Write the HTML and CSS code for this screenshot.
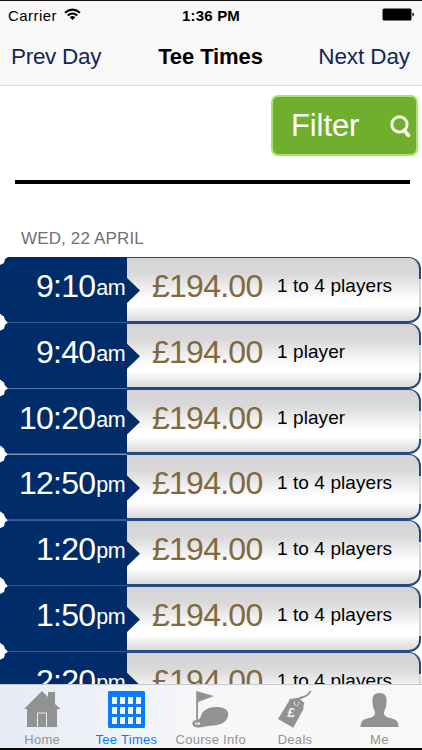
FILE: index.html
```html
<!DOCTYPE html>
<html lang="en">
<head>
<meta charset="utf-8">
<title>Tee Times</title>
<link rel="stylesheet" href="styles.css">
</head>
<body>
<div class="phone">
  <header class="top">
    <div class="status">
      <div class="carrier"><span>Carrier</span>
        <svg class="wifi" viewBox="0 0 17 13"><g fill="none" stroke="#000" stroke-width="2"><path d="M1 4.700Q8.500-1.500 16 4.700"/><path d="M3.700 7.500Q8.500 3.500 13.300 7.500"/></g><path d="M5.700 9.200Q8.500 7 11.300 9.200L8.500 12Z"/></svg>
      </div>
      <span class="clock">1:36 PM</span>
      <svg class="battery" viewBox="0 0 33 13"><rect x=".5" y=".5" width="29" height="12" rx="1.500"/><path d="M30.500 4.500Q32 5 32 6.500T30.500 8.500Z"/></svg>
    </div>
    <nav class="nav"><a>Prev Day</a><h1>Tee Times</h1><a class="next">Next Day</a></nav>
  </header>
  <main class="content">
    <button class="filter"><span>Filter</span>
      <svg viewBox="0 0 20 22"><circle cx="9" cy="9" r="7.300" fill="none" stroke="#f4fbe9" stroke-width="2.900"/><path d="M13.500 14.500L17.500 19.500" stroke="#f4fbe9" stroke-width="3.600" stroke-linecap="round"/></svg>
    </button>
    <div class="rule"></div>
    <h2>WED, 22 APRIL</h2>
    <ul class="slots">
      <li><div class="time">9:10<small>am</small></div><div class="offer"><b>£194.00</b><span>1 to 4 players</span></div></li>
      <li><div class="time">9:40<small>am</small></div><div class="offer"><b>£194.00</b><span>1 player</span></div></li>
      <li><div class="time">10:20<small>am</small></div><div class="offer"><b>£194.00</b><span>1 player</span></div></li>
      <li><div class="time">12:50<small>pm</small></div><div class="offer"><b>£194.00</b><span>1 to 4 players</span></div></li>
      <li><div class="time">1:20<small>pm</small></div><div class="offer"><b>£194.00</b><span>1 to 4 players</span></div></li>
      <li><div class="time">1:50<small>pm</small></div><div class="offer"><b>£194.00</b><span>1 to 4 players</span></div></li>
      <li><div class="time">2:20<small>pm</small></div><div class="offer"><b>£194.00</b><span>1 to 4 players</span></div></li>
    </ul>
  </main>
  <footer class="tabs">
    <div class="tab"><svg viewBox="0 0 40 40"><path d="M2 20L20 2L26 8V3H33V15L38.500 20H35V38H5V20Z"/><path d="M15.500 38V24H24.500V38" fill="none" stroke="#e9ecf2"/></svg><span>Home</span></div>
    <div class="tab active"><svg viewBox="0 0 40 40"><rect x="2" y="2" width="37" height="37" rx="1.500"/><path fill="#f0f5fd" d="M6 8h5v7H6zM14 8h5v7h-5zM22 8h5v7h-5zM30 8h5v7h-5zM6 18h5v7H6zM14 18h5v7h-5zM22 18h5v7h-5zM30 18h5v7h-5zM6 28h5v7H6zM14 28h5v7h-5zM22 28h5v7h-5zM30 28h5v7h-5z"/></svg><span>Tee Times</span></div>
    <div class="tab"><svg viewBox="0 0 40 40"><path d="M5.200 2L23 7L7 13V32H5.200Z"/><path d="M6 31C11 30 9 26 12 23C17 18 24 17.500 30 18.500C36 19.500 38 23 37 27C35.500 34 28 36.500 21 36.500L8 38.500C4 38.500 1.300 37 1.300 34.500C1.300 32 3.500 31 6 31Z"/><ellipse cx="6.500" cy="34.500" rx="2.800" ry="1.300" fill="#f3f4f6"/><path d="M5 35L7 33.500" stroke="#929292"/></svg><span>Course Info</span></div>
    <div class="tab"><svg viewBox="0 0 40 40"><path d="M14.500 9.700Q19 10 23 8.500L29.300 13.700Q28 17 28.500 20L18.300 38.700L3 30L14 12Z"/><path d="M23 14C23 5 32 11 35.500 2" fill="none" stroke="#929292" stroke-width="2"/><path d="M19.500 12.500Q18.500 16.500 21.500 16.800Q24 17 24 12.500" fill="none" stroke="#f5f5f5" stroke-width=".8"/><text x="12.500" y="28" class="pound" transform="rotate(8 16 24)">£</text></svg><span>Deals</span></div>
    <div class="tab"><svg viewBox="0 0 40 40"><path d="M20.500 4C14.500 4 12.800 8 13.600 14C13.800 19 15.500 21 16 23Q16.500 27 12 28.500C5 30 1.500 31 1.500 38H39.500C39.500 31 36 30 29 28.500Q24.500 27 25 23C25.500 21 27.200 19 27.400 14C28.200 8 26.500 4 20.500 4Z"/></svg><span>Me</span></div>
  </footer>
</div>
</body>
</html>
```
FILE: styles.css
```css
* { box-sizing: border-box; }
body { margin: 0; font-family: "Liberation Sans", Arial, sans-serif; color: #000; background: #fff; }
.phone { width: 422px; height: 750px; overflow: hidden; display: flex; flex-direction: column; border-top: 1px solid #151015; border-bottom: 2px solid #080808; }
.top { height: 85px; flex: none; background: #f8f8f8; border-bottom: 1px solid #dcdcdc; }
.status { height: 28px; padding: 0 8px; display: grid; grid-template-columns: 1fr auto 1fr; align-items: center; font-size: 15px; }
.carrier { display: flex; align-items: center; gap: 7px; letter-spacing: .45px; }
.wifi { width: 17px; height: 13px; margin-top: -2px; }
.clock { font-weight: bold; letter-spacing: .2px; }
.battery { width: 33px; height: 13px; justify-self: end; margin: -2px -1px 0 0; }
.nav { height: 54px; padding: 2px 12px 0 11px; display: grid; grid-template-columns: 1fr auto 1fr; align-items: center; font-size: 22.500px; letter-spacing: -.1px; color: #132653; }
.nav a:first-child { letter-spacing: -.3px; }
.nav h1 { margin: 0; font-size: 22px; color: #000; }
.next { text-align: right; }
.content { flex: 1; min-height: 0; overflow: hidden; display: flex; flex-direction: column; }
.filter { flex: none; align-self: flex-end; width: 147px; height: 61px; margin: 9px 4px 0 0; padding: 0 5px 0 18px; border: 2px solid #a6e66b; border-radius: 7px; background: #70ae2d; color: #fff; font: 31px "Liberation Sans", Arial, sans-serif; letter-spacing: -.1px; display: flex; justify-content: space-between; align-items: center; }
.filter svg { width: 21px; height: 23px; margin-top: 1px; }
.rule { flex: none; height: 4px; margin: 24px 12px 0 15px; background: #000; }
h2 { flex: none; margin: 44px 0 0 21px; height: 29px; line-height: 21px; font-size: 17px; letter-spacing: .15px; font-weight: normal; color: #707174; }
.slots { list-style: none; margin: 0; padding: 0; }
.slots li { position: relative; height: 65.800px; width: 421px; display: flex; }
.time { width: 127px; flex: none; padding: 9px 2px 0 0; background: #002d69; border-bottom: 1px solid #35598b; color: #fff; text-align: right; font-size: 32px; line-height: 41px; letter-spacing: -.75px; white-space: nowrap; clip-path: polygon(8px 0, 5px 2px, 4px 6px, 0 8px, 0 calc(100% - 9px), 4px calc(100% - 6px), 5px calc(100% - 3px), 8px 100%, 100% 100%, 100% 0); }
.time small { position: relative; top: -2px; font-size: 21.500px; letter-spacing: -.6px; margin-left: 1px; }
.offer { flex: 1; padding: 8px 0 0 25px; display: flex; border: 1px solid #234b80; border-width: 1px 2px 2px 0; border-radius: 0 12px 12px 0; background: linear-gradient(#d4d4d6, #d9d9da 25%, #fff 66%, #fff 76%, #d9d9da); }
.offer b { width: 125px; color: #806a3d; font-size: 32px; line-height: 41px; font-weight: normal; letter-spacing: -.75px; }
.offer span { font-size: 19px; line-height: 40px; letter-spacing: .08px; }
.slots li::before { content: ""; position: absolute; right: 0; top: 22px; width: 2px; height: 28px; background: #d5d5d8; }
.slots li::after { content: ""; position: absolute; left: 126px; top: 20px; width: 14px; height: 27px; background: #002d69; clip-path: polygon(0 0, 100% 50%, 0 100%); }
.tabs { height: 64px; flex: none; border-top: 1px solid #c5c9ce; background: linear-gradient(90deg, #e5ebf5, #f1f3f7 32%, #f7f7f7 50%, #f8f8f8); display: grid; grid-template-columns: repeat(5, 84.300px); color: #929292; fill: #929292; }
.tab { display: flex; flex-direction: column; align-items: center; padding-top: 4px; font-size: 13px; line-height: 17px; letter-spacing: .3px; white-space: nowrap; }
.tab svg { width: 40px; height: 40px; margin-bottom: 2px; }
.active { color: #087bff; fill: #087bff; }
.pound { font-size: 13px; font-weight: bold; fill: #f5f5f5; }
```
